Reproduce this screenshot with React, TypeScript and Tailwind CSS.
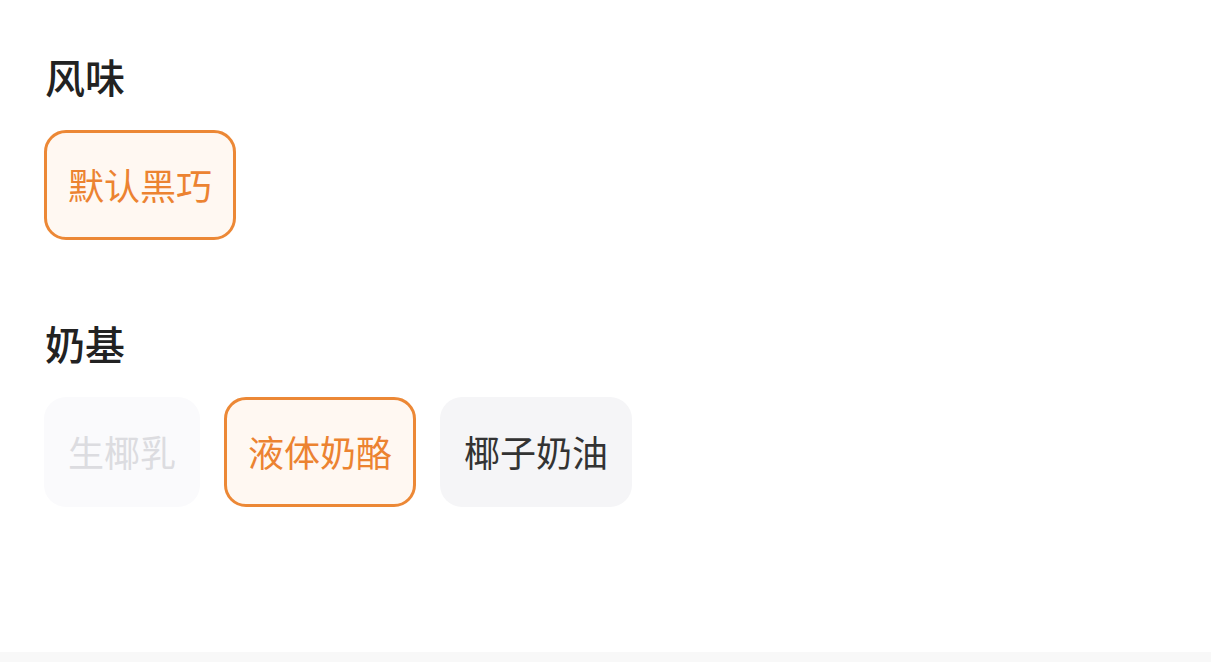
import React from "react";

type Opt = { label: string; state: "selected" | "disabled" | "normal" };

function Chip({ label, state }: Opt) {
  const cls =
    state === "selected"
      ? "border-[#ec8836] bg-[#fff8f2] text-[#ec8331]"
      : state === "disabled"
      ? "border-transparent bg-[#fafafc] text-[#dcdce0]"
      : "border-transparent bg-[#f5f5f7] text-[#333333]";
  return (
    <div
      className={`flex h-[110px] items-center justify-center rounded-[22px] border-[3px] px-[21px] pb-[2px] text-[36px] leading-none ${cls}`}
    >
      {label}
    </div>
  );
}

function Section({ title, options, className }: { title: string; options: Opt[]; className?: string }) {
  return (
    <div className={className}>
      <div className="pl-px text-[40px] font-medium leading-[48px] text-[#222222]">{title}</div>
      <div className="mt-[30px] flex gap-[24px]">
        {options.map((o) => (
          <Chip key={o.label} {...o} />
        ))}
      </div>
    </div>
  );
}

export default function App() {
  return (
    <div
      className="flex h-[662px] w-full flex-col bg-white"
      style={{ fontFamily: '"Noto Sans CJK SC", "Noto Sans", sans-serif' }}
    >
      <div className="flex-1 px-[44px] pt-[52px]">
        <Section title="风味" options={[{ label: "默认黑巧", state: "selected" }]} />
        <Section
          className="mt-[79px]"
          title="奶基"
          options={[
            { label: "生椰乳", state: "disabled" },
            { label: "液体奶酪", state: "selected" },
            { label: "椰子奶油", state: "normal" },
          ]}
        />
      </div>
      <div className="h-[10px] bg-[#f8f8f8]" />
    </div>
  );
}
